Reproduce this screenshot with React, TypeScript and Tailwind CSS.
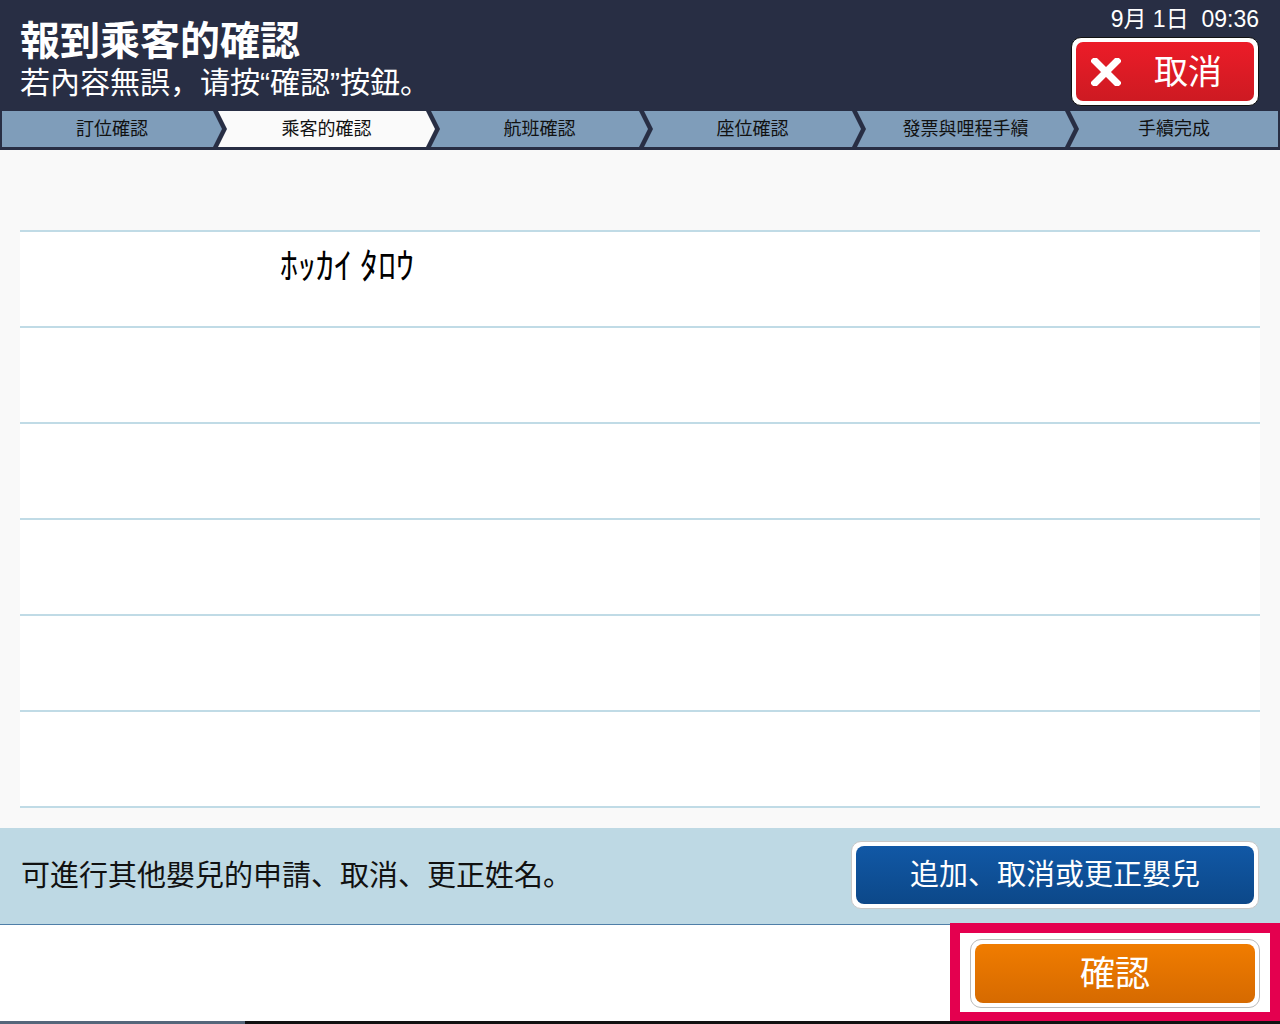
import React from "react";

const TC = { fontFamily: '"Liberation Sans", "Noto Sans CJK JP", sans-serif' };

const steps = ["訂位確認", "乘客的確認", "航班確認", "座位確認", "發票與哩程手續", "手續完成"];

function Step({ label, index }: { label: string; index: number }) {
  const first = index === 0;
  const last = index === steps.length - 1;
  const active = index === 1;
  const shape = first
    ? "[clip-path:polygon(0_0,calc(100%_-_9px)_0,100%_50%,calc(100%_-_9px)_100%,0_100%)] w-[220px]"
    : last
    ? "[clip-path:polygon(0_0,100%_0,100%_100%,0_100%,9px_50%)] flex-1 -ml-[4px]"
    : "[clip-path:polygon(0_0,calc(100%_-_9px)_0,100%_50%,calc(100%_-_9px)_100%,0_100%,9px_50%)] w-[217px] -ml-[4px]";
  return (
    <div
      className={`${shape} h-full flex items-center justify-center text-[18px] leading-none text-[#111] ${
        active ? "bg-[#fafafa]" : "bg-[#7f9dba]"
      }`}
    >
      {label}
    </div>
  );
}

export default function App() {
  return (
    <div className="w-[1280px] h-[1024px] flex flex-col overflow-hidden" style={TC}>
      {/* Header */}
      <header className="h-[111px] bg-[#282e44] flex justify-between pl-[20px] pr-[21px]">
        <div className="flex flex-col pt-[18px] text-white">
          <h1 className="text-[40px] font-bold leading-[46px]">報到乘客的確認</h1>
          <p className="text-[30px] leading-[36px] mt-[1px]">若內容無誤，请按“確認”按鈕。</p>
        </div>
        <div className="flex flex-col items-end pt-[5px]">
          <div className="text-white text-[23px] leading-[28px]">9月 1日&nbsp; 09:36</div>
          <button className="mt-[4px] w-[188px] h-[69px] rounded-[10px] bg-white p-[4px] border border-[#111]">
            <div className="h-full w-full rounded-[7px] bg-gradient-to-b from-[#ec1c28] to-[#cd1a22] flex items-center pl-[15px]">
              <svg width="30" height="28" viewBox="0 0 30 28">
                <path d="M4 3 L26 25 M26 3 L4 25" stroke="#fff" strokeWidth="7" strokeLinecap="square" />
              </svg>
              <span className="ml-[33px] text-white text-[34px] leading-none">取消</span>
            </div>
          </button>
        </div>
      </header>

      {/* Steps */}
      <nav className="h-[39px] bg-[#282e44] px-[2px] pb-[3px] flex">
        {steps.map((s, i) => (
          <Step key={s} label={s} index={i} />
        ))}
      </nav>

      {/* Content */}
      <main className="h-[678px] bg-[#f9f9f9] pt-[80px] px-[20px]">
        <div className="bg-white border-b-2 border-[#c0dbe6]">
          {[0, 1, 2, 3, 4, 5].map((i) => (
            <div key={i} className="h-[96px] border-t-2 border-[#c0dbe6]">
              {i === 0 && (
                <div
                  className="pl-[260px] pt-[11px] text-[36px] leading-[40px] text-black"
                  style={{ fontFamily: '"Noto Sans CJK JP", sans-serif' }}
                >
                  ﾎｯｶｲ ﾀﾛｳ
                </div>
              )}
            </div>
          ))}
        </div>
      </main>

      {/* Info bar */}
      <section className="h-[97px] bg-[#bed9e4] border-b border-[#4f7fa8] flex items-center justify-between pl-[21px] pr-[21px]">
        <p className="text-[29px] leading-none text-[#111]">可進行其他嬰兒的申請、取消、更正姓名。</p>
        <button className="w-[408px] h-[68px] rounded-[10px] bg-white border border-[#c8c8c8] p-[4px] -mt-[2px]">
          <div className="h-full w-full rounded-[8px] bg-gradient-to-b from-[#1158a6] to-[#0c4889] flex items-center justify-center text-white text-[29px] leading-none">
            追加、取消或更正嬰兒
          </div>
        </button>
      </section>

      {/* Bottom */}
      <section className="h-[96px] bg-white flex justify-end">
        <div className="-mt-[2px] h-[99px] w-[330px] border-[10px] border-[#e4004f] bg-white pl-[10px] pr-[10px] pt-[6px]">
          <button className="w-[290px] h-[69px] rounded-[11px] bg-white border border-[#bbbbbb] p-[4px]">
            <div className="h-full w-full rounded-[8px] bg-gradient-to-b from-[#f07c00] to-[#d66a00] flex items-center justify-center text-white text-[35px] leading-none">
              確認
            </div>
          </button>
        </div>
      </section>
      <div className="h-[3px] flex">
        <div className="w-[245px] bg-[#55667a]" />
        <div className="flex-1 bg-[#111]" />
      </div>
    </div>
  );
}
